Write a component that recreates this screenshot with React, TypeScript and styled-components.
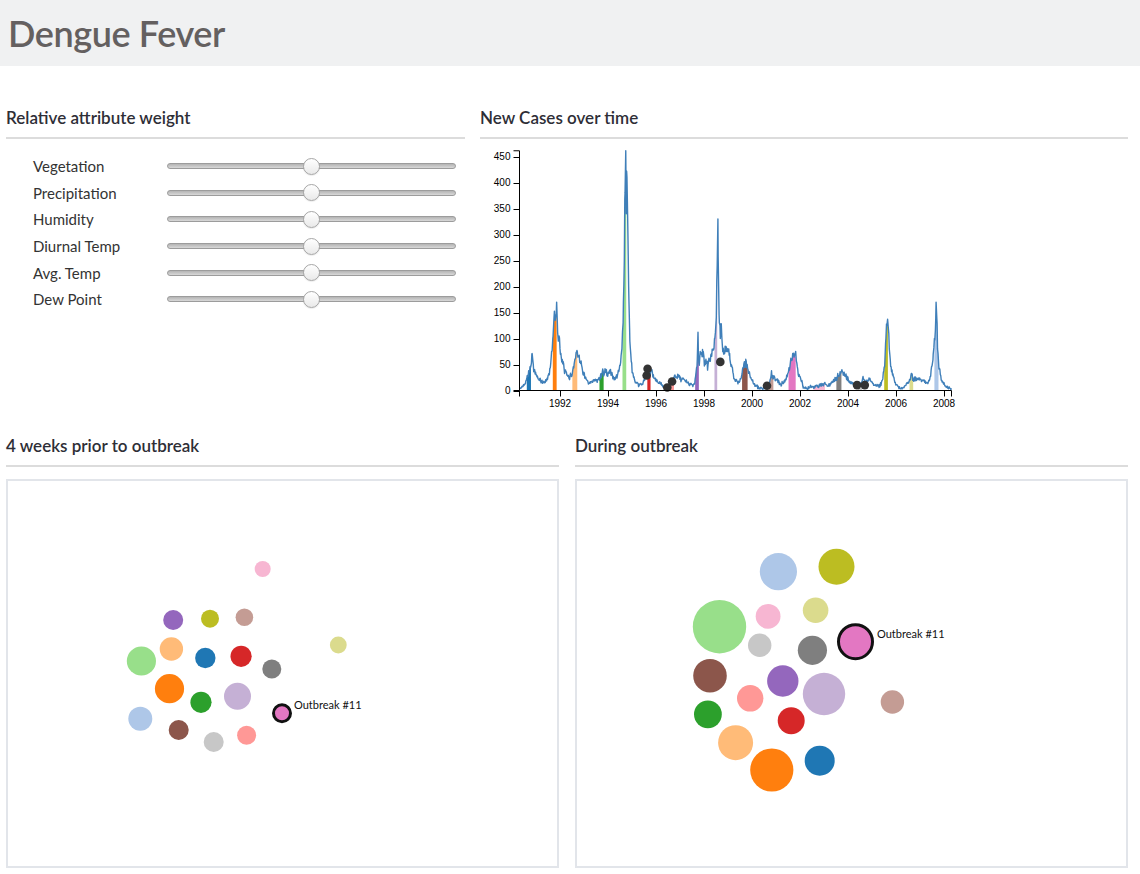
import React, { useMemo } from "react";
import styled, { createGlobalStyle } from "styled-components";

const GlobalStyle = createGlobalStyle`
  html, body { margin: 0; padding: 0; background: #fff; }
  body { font-family: Lato, "Open Sans", sans-serif; color: #333; }
`;

const Header = styled.header`
  height: 66px;
  background: #f0f1f2;
  padding: 1px 0 0 8px;
  box-sizing: border-box;
`;

const Title = styled.h1`
  margin: 0;
  font-size: 36px;
  line-height: 64px;
  font-weight: 600;
  color: #646060;
  letter-spacing: -0.4px;
`;

const Main = styled.main`
  padding: 0 12px 0 6px;
`;

const TopRow = styled.div`
  display: grid;
  grid-template-columns: 459px 648px;
  column-gap: 15px;
  margin-top: 41px;
`;

const BottomRow = styled.div`
  display: grid;
  grid-template-columns: 1fr 1fr;
  column-gap: 16px;
  margin-top: 20px;
`;

const Section = styled.section`
  display: flex;
  flex-direction: column;
`;

const SectionTitle = styled.h2`
  margin: 0;
  font-size: 17px;
  line-height: 22px;
  font-weight: 600;
  color: #2e2e36;
  padding-bottom: 8px;
  border-bottom: 2px solid #dcdcdc;
`;

const SliderList = styled.div`
  padding: 14px 9px 0 27px;
`;

const SliderRow = styled.div`
  display: grid;
  grid-template-columns: 134px 1fr;
  align-items: center;
  height: 26.6px;
`;

const SliderLabel = styled.span`
  font-size: 15px;
  color: #333;
`;

const Track = styled.div`
  position: relative;
  height: 4px;
  border: 1px solid #9c9c9c;
  border-radius: 3px;
  background: linear-gradient(#b4b4b4, #d8d8d8);
`;

const Thumb = styled.div`
  position: absolute;
  top: 50%;
  width: 15px;
  height: 15px;
  margin: -8.5px 0 0 -8.5px;
  border-radius: 50%;
  border: 1px solid #a6a6a6;
  background: linear-gradient(#ffffff, #e9e9e9);
  box-shadow: 0 1px 1px rgba(0, 0, 0, 0.08);
`;

const ChartSvg = styled.svg`
  display: block;
  margin-top: 6px;
  font-family: "Liberation Sans", Arial, sans-serif;
  font-size: 10px;
`;

const PlotBox = styled.div`
  margin-top: 12px;
  height: 389px;
  box-sizing: border-box;
  border: 2px solid #e2e5ea;
  background: #fff;
`;

const PlotSvg = styled.svg`
  display: block;
  width: 100%;
  height: 100%;
  font-family: Lato, "Open Sans", sans-serif;
`;

const sliders = ["Vegetation", "Precipitation", "Humidity", "Diurnal Temp", "Avg. Temp", "Dew Point"];

const ctrl: [number, number][] = [
  [1990.33, 3], [1990.45, 8], [1990.55, 15], [1990.62, 25], [1990.7, 38], [1990.76, 42], [1990.8, 55],
  [1990.84, 71], [1990.87, 50], [1990.92, 40], [1991.0, 30], [1991.1, 22], [1991.2, 18], [1991.3, 15],
  [1991.4, 18], [1991.5, 25], [1991.58, 40], [1991.65, 75], [1991.7, 100], [1991.75, 140], [1991.8, 135],
  [1991.83, 145], [1991.86, 170], [1991.89, 130], [1991.93, 95], [1991.96, 105], [1992.0, 80], [1992.05, 65],
  [1992.1, 55], [1992.18, 40], [1992.25, 32], [1992.35, 25], [1992.45, 28], [1992.55, 40], [1992.62, 60],
  [1992.67, 73], [1992.72, 75], [1992.76, 65], [1992.8, 68], [1992.85, 55], [1992.9, 45], [1993.0, 32],
  [1993.1, 20], [1993.2, 12], [1993.3, 15], [1993.45, 20], [1993.55, 18], [1993.65, 25], [1993.72, 30],
  [1993.78, 38], [1993.82, 30], [1993.88, 40], [1993.95, 35], [1994.0, 30], [1994.1, 38], [1994.18, 28],
  [1994.3, 22], [1994.4, 30], [1994.5, 48], [1994.58, 80], [1994.63, 130], [1994.68, 250], [1994.71, 380],
  [1994.74, 461], [1994.76, 340], [1994.79, 410], [1994.82, 330], [1994.86, 200], [1994.9, 120],
  [1994.95, 70], [1995.0, 40], [1995.1, 20], [1995.2, 12], [1995.3, 10], [1995.4, 12], [1995.5, 18],
  [1995.6, 28], [1995.68, 35], [1995.75, 30], [1995.82, 38], [1995.9, 28], [1996.0, 20], [1996.1, 15],
  [1996.2, 12], [1996.3, 8], [1996.4, 6], [1996.5, 5], [1996.6, 12], [1996.7, 22], [1996.78, 30],
  [1996.85, 25], [1996.95, 28], [1997.05, 20], [1997.15, 22], [1997.3, 15], [1997.45, 12], [1997.55, 10],
  [1997.62, 15], [1997.68, 40], [1997.72, 60], [1997.75, 112], [1997.78, 50], [1997.82, 60], [1997.87, 70],
  [1997.92, 65], [1997.97, 75], [1998.02, 50], [1998.08, 60], [1998.15, 45], [1998.22, 55], [1998.3, 70],
  [1998.38, 80], [1998.45, 100], [1998.5, 130], [1998.55, 240], [1998.58, 330], [1998.61, 200],
  [1998.64, 130], [1998.68, 100], [1998.72, 128], [1998.76, 90], [1998.82, 70], [1998.88, 85],
  [1998.95, 75], [1999.02, 80], [1999.08, 60], [1999.15, 45], [1999.25, 25], [1999.35, 18], [1999.45, 15],
  [1999.55, 22], [1999.62, 40], [1999.67, 55], [1999.7, 45], [1999.74, 60], [1999.78, 50], [1999.83, 40],
  [1999.9, 30], [2000.0, 20], [2000.1, 12], [2000.2, 8], [2000.3, 5], [2000.4, 3], [2000.5, 4], [2000.6, 6],
  [2000.7, 10], [2000.76, 22], [2000.8, 35], [2000.84, 25], [2000.9, 25], [2001.0, 20], [2001.1, 18],
  [2001.2, 12], [2001.3, 15], [2001.4, 20], [2001.5, 35], [2001.58, 50], [2001.65, 60], [2001.72, 68],
  [2001.78, 70], [2001.82, 75], [2001.87, 50], [2001.92, 35], [2002.0, 25], [2002.08, 15], [2002.15, 5],
  [2002.25, 4], [2002.35, 5], [2002.45, 8], [2002.55, 6], [2002.65, 10], [2002.75, 8], [2002.85, 12],
  [2002.95, 10], [2003.05, 14], [2003.15, 8], [2003.25, 12], [2003.35, 15], [2003.45, 20], [2003.55, 25],
  [2003.65, 32], [2003.72, 37], [2003.8, 35], [2003.88, 28], [2003.95, 25], [2004.05, 18], [2004.15, 15],
  [2004.25, 12], [2004.35, 10], [2004.45, 15], [2004.55, 12], [2004.62, 25], [2004.7, 18], [2004.8, 15],
  [2004.9, 22], [2005.0, 15], [2005.1, 12], [2005.2, 10], [2005.3, 8], [2005.4, 15], [2005.48, 30],
  [2005.54, 60], [2005.58, 100], [2005.62, 125], [2005.65, 137], [2005.68, 120], [2005.72, 80],
  [2005.76, 60], [2005.82, 40], [2005.9, 25], [2006.0, 12], [2006.1, 6], [2006.2, 4], [2006.3, 5],
  [2006.4, 10], [2006.5, 15], [2006.58, 20], [2006.62, 28], [2006.66, 32], [2006.7, 20], [2006.78, 25],
  [2006.85, 18], [2006.92, 25], [2007.0, 20], [2007.1, 22], [2007.2, 15], [2007.3, 15], [2007.4, 22],
  [2007.48, 40], [2007.55, 70], [2007.6, 100], [2007.64, 115], [2007.67, 170], [2007.7, 140],
  [2007.73, 80], [2007.78, 50], [2007.84, 30], [2007.9, 20], [2008.0, 12], [2008.1, 8], [2008.2, 5],
  [2008.31, 3],
];

const outbreaks: [number, number, string][] = [
  [1990.61, 1990.8, "#1f77b4"],
  [1991.68, 1991.88, "#ff7f0e"],
  [1992.51, 1992.74, "#ffbb78"],
  [1993.63, 1993.82, "#2ca02c"],
  [1994.6, 1994.77, "#98df8a"],
  [1995.62, 1995.79, "#d62728"],
  [1996.51, 1996.76, "#ff9896"],
  [1997.62, 1997.79, "#9467bd"],
  [1998.42, 1998.55, "#c5b0d5"],
  [1999.57, 1999.82, "#8c564b"],
  [2000.68, 2000.89, "#c49c94"],
  [2001.51, 2001.83, "#e377c2"],
  [2002.55, 2003.04, "#f7b6d2"],
  [2003.5, 2003.74, "#7f7f7f"],
  [2004.4, 2004.6, "#c7c7c7"],
  [2005.5, 2005.67, "#bcbd22"],
  [2006.55, 2006.72, "#dbdb8d"],
  [2007.58, 2007.78, "#aec7e8"],
];

const dots: [number, number][] = [
  [1995.65, 41.7], [1995.61, 28.8], [1996.47, 5.8], [1996.67, 17.3], [1998.68, 55],
  [2000.625, 9], [2004.375, 10.4], [2004.7, 10.4],
];

const X0 = 560;
const PX_YEAR = 24;
const Y0 = 390.5;
const PX_CASE = 0.52;
const xs = (t: number) => X0 + (t - 1992) * PX_YEAR;
const ys = (v: number) => Y0 - v * PX_CASE;

function mulberry32(a: number) {
  return function () {
    a |= 0;
    a = (a + 0x6d2b79f5) | 0;
    let t = Math.imul(a ^ (a >>> 15), 1 | a);
    t = (t + Math.imul(t ^ (t >>> 7), 61 | t)) ^ t;
    return ((t ^ (t >>> 14)) >>> 0) / 4294967296;
  };
}

function interp(t: number) {
  for (let i = 0; i < ctrl.length - 1; i++) {
    const [t0, v0] = ctrl[i];
    const [t1, v1] = ctrl[i + 1];
    if (t >= t0 && t <= t1) return v0 + ((t - t0) / (t1 - t0)) * (v1 - v0);
  }
  return ctrl[ctrl.length - 1][1];
}

function useSeries() {
  return useMemo(() => {
    const rnd = mulberry32(42);
    const step = 7 / 365.25;
    const times: number[] = [];
    for (let t = 1990.33; t <= 2008.31; t += step) times.push(t);
    const peaks = ctrl.filter(([, v]) => v >= 60).map(([t]) => t);
    const all = [...times.filter((t) => !peaks.some((p) => Math.abs(p - t) < step * 0.5)), ...peaks].sort(
      (a, b) => a - b
    );
    return all.map((t): [number, number] => {
      const base = interp(t);
      const n1 = rnd() * 2 - 1;
      const n2 = rnd() * 2 - 1;
      const isPeak = peaks.includes(t);
      const v = isPeak ? base : base + base * 0.14 * n1 + 2.5 * n2;
      return [t, Math.max(0, v)];
    });
  }, []);
}

function CasesChart() {
  const pts = useSeries();
  const line = pts.map(([t, v], i) => `${i ? "L" : "M"}${xs(t).toFixed(2)},${ys(v).toFixed(2)}`).join("");
  const areas = outbreaks.map(([a, b, c]) => {
    const seg = pts.filter(([t]) => t >= a && t <= b);
    if (!seg.length) return null;
    const d =
      `M${xs(seg[0][0]).toFixed(2)},${Y0}` +
      seg.map(([t, v]) => `L${xs(t).toFixed(2)},${ys(v).toFixed(2)}`).join("") +
      `L${xs(seg[seg.length - 1][0]).toFixed(2)},${Y0}Z`;
    return <path key={a} d={d} fill={c} />;
  });
  const yTicks = [0, 50, 100, 150, 200, 250, 300, 350, 400, 450];
  const xTicks = [1992, 1994, 1996, 1998, 2000, 2002, 2004, 2006, 2008];
  const axisLeft = 519.5;
  const axisRight = 951.5;
  const yTop = ys(461);
  return (
    <ChartSvg width={648} height={270} viewBox="480 145 648 270">
      {areas}
      <path d={line} fill="none" stroke="#3f7fb9" strokeWidth={1.4} strokeLinejoin="round" />
      {dots.map(([t, v], i) => (
        <circle key={i} cx={xs(t)} cy={ys(v)} r={4.3} fill="#333" />
      ))}
      <path d={`M${axisLeft - 6},${yTop}H${axisLeft}V${Y0}H${axisLeft - 6}`} fill="none" stroke="#000" />
      {yTicks.map((v) => (
        <g key={v}>
          <line x1={axisLeft - 6} x2={axisLeft} y1={Math.round(ys(v)) + 0.5} y2={Math.round(ys(v)) + 0.5} stroke="#000" />
          <text x={axisLeft - 9} y={ys(v)} dy="0.32em" textAnchor="end" fill="#000">
            {v}
          </text>
        </g>
      ))}
      <path d={`M${axisLeft},${Y0 + 6}V${Y0}H${axisRight}V${Y0 + 6}`} fill="none" stroke="#000" />
      {xTicks.map((yr) => (
        <g key={yr}>
          <line x1={Math.round(xs(yr)) + 0.5} x2={Math.round(xs(yr)) + 0.5} y1={Y0} y2={Y0 + 6} stroke="#000" />
          <text x={xs(yr)} y={Y0 + 9} dy="0.71em" textAnchor="middle" fill="#000">
            {yr}
          </text>
        </g>
      ))}
    </ChartSvg>
  );
}

type Bubble = { c: string; x: number; y: number; r: number };
type Outbreak = { x: number; y: number; r: number; lx: number; ly: number };

const priorBubbles: Bubble[] = [
  { c: "#f7b6d2", x: 262.7, y: 569, r: 8 },
  { c: "#9467bd", x: 173.2, y: 620, r: 10 },
  { c: "#bcbd22", x: 210, y: 618.7, r: 9 },
  { c: "#c49c94", x: 244.4, y: 617.3, r: 8.8 },
  { c: "#dbdb8d", x: 338.3, y: 645, r: 8.4 },
  { c: "#98df8a", x: 141.4, y: 661, r: 14.6 },
  { c: "#ffbb78", x: 171.4, y: 649, r: 11.7 },
  { c: "#1f77b4", x: 205.3, y: 658, r: 10.2 },
  { c: "#d62728", x: 241.1, y: 656.3, r: 10.6 },
  { c: "#7f7f7f", x: 271.8, y: 669, r: 9.5 },
  { c: "#ff7f0e", x: 169.5, y: 688.7, r: 14.6 },
  { c: "#2ca02c", x: 201, y: 702.3, r: 10.6 },
  { c: "#c5b0d5", x: 237.5, y: 696.3, r: 13.5 },
  { c: "#aec7e8", x: 140.3, y: 718.7, r: 12 },
  { c: "#8c564b", x: 178.7, y: 730, r: 10 },
  { c: "#c7c7c7", x: 213.7, y: 742, r: 10 },
  { c: "#ff9896", x: 246.6, y: 735.3, r: 9.5 },
];

const duringBubbles: Bubble[] = [
  { c: "#aec7e8", x: 778.4, y: 571.7, r: 18.6 },
  { c: "#bcbd22", x: 836.5, y: 566.7, r: 18 },
  { c: "#98df8a", x: 719.5, y: 626.7, r: 26.7 },
  { c: "#f7b6d2", x: 768.1, y: 616.3, r: 12.4 },
  { c: "#dbdb8d", x: 815.6, y: 610.3, r: 12.8 },
  { c: "#c7c7c7", x: 759.7, y: 645.3, r: 11.7 },
  { c: "#7f7f7f", x: 812.4, y: 650.3, r: 14.6 },
  { c: "#8c564b", x: 710, y: 675.7, r: 16.8 },
  { c: "#9467bd", x: 782.8, y: 681, r: 15.7 },
  { c: "#c5b0d5", x: 824, y: 694, r: 21.2 },
  { c: "#ff9896", x: 750.2, y: 698.3, r: 13.2 },
  { c: "#c49c94", x: 892.4, y: 702, r: 11.7 },
  { c: "#2ca02c", x: 707.9, y: 714.3, r: 13.9 },
  { c: "#d62728", x: 791.2, y: 720.7, r: 13.5 },
  { c: "#ffbb78", x: 735.6, y: 742.7, r: 17.5 },
  { c: "#ff7f0e", x: 771.8, y: 770, r: 21.6 },
  { c: "#1f77b4", x: 819.7, y: 760.7, r: 15 },
];

function BubblePlot({ ox, bubbles, ob }: { ox: number; bubbles: Bubble[]; ob: Outbreak }) {
  return (
    <PlotBox>
      <PlotSvg viewBox={`${ox} 481 549 385`} preserveAspectRatio="xMinYMin meet">
        {bubbles.map((b, i) => (
          <circle key={i} cx={b.x} cy={b.y} r={b.r} fill={b.c} />
        ))}
        <circle cx={ob.x} cy={ob.y} r={ob.r} fill="#e377c2" stroke="#111" strokeWidth={3} />
        <text x={ob.lx} y={ob.ly} dy="0.35em" fontSize={11} fill="#111">
          Outbreak #11
        </text>
      </PlotSvg>
    </PlotBox>
  );
}

export default function App() {
  return (
    <>
      <GlobalStyle />
      <Header>
        <Title>Dengue Fever</Title>
      </Header>
      <Main>
        <TopRow>
          <Section>
            <SectionTitle>Relative attribute weight</SectionTitle>
            <SliderList>
              {sliders.map((s) => (
                <SliderRow key={s}>
                  <SliderLabel>{s}</SliderLabel>
                  <Track>
                    <Thumb style={{ left: "50%" }} />
                  </Track>
                </SliderRow>
              ))}
            </SliderList>
          </Section>
          <Section>
            <SectionTitle>New Cases over time</SectionTitle>
            <CasesChart />
          </Section>
        </TopRow>
        <BottomRow>
          <Section>
            <SectionTitle>4 weeks prior to outbreak</SectionTitle>
            <BubblePlot ox={8} bubbles={priorBubbles} ob={{ x: 282, y: 713.3, r: 8.5, lx: 294, ly: 705 }} />
          </Section>
          <Section>
            <SectionTitle>During outbreak</SectionTitle>
            <BubblePlot ox={577} bubbles={duringBubbles} ob={{ x: 855.5, y: 641.7, r: 17, lx: 877, ly: 634 }} />
          </Section>
        </BottomRow>
      </Main>
    </>
  );
}
